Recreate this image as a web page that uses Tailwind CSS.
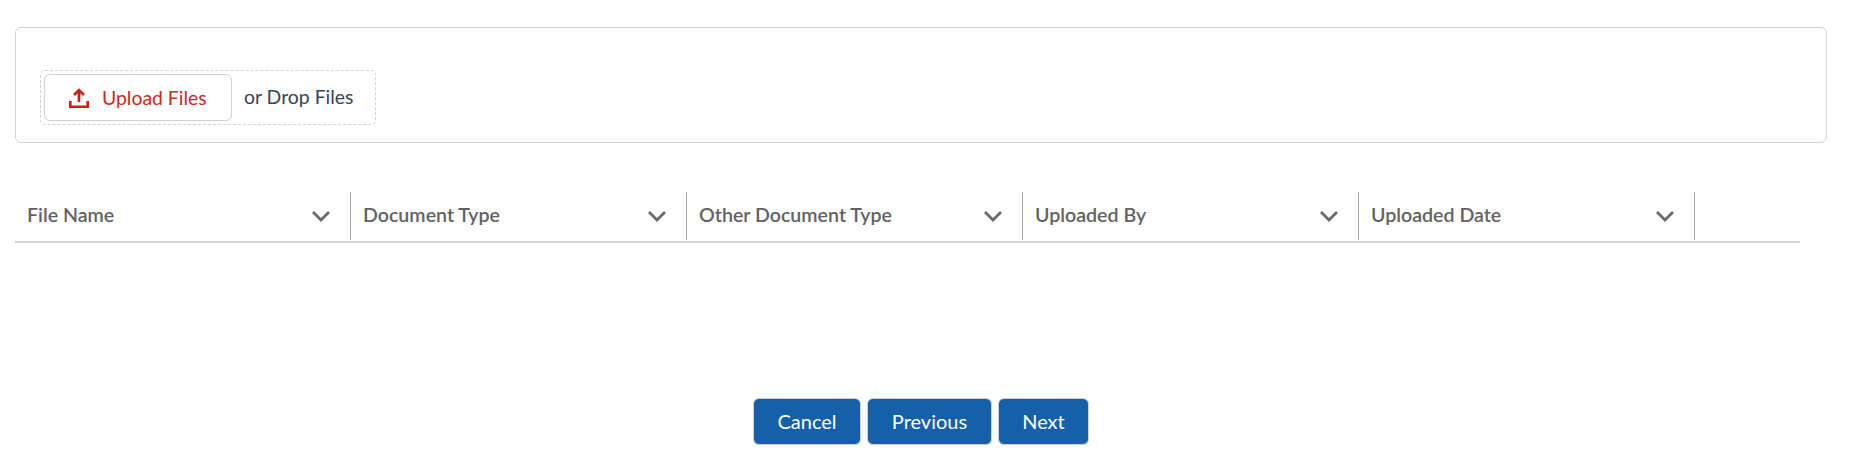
<!DOCTYPE html>
<html lang="en">
<head>
    <meta charset="UTF-8">
    <title>Documents</title>
    <script src="https://cdn.jsdelivr.net/npm/@tailwindcss/browser@4"></script>
</head>
<body class="bg-white font-['Lato',sans-serif] h-[476px] overflow-hidden">
    <div class="pt-[27px] pl-[15px] pr-[23px]">
        <!-- Upload card -->
        <div class="h-[116px] border border-[#d4d4d4] rounded-[6px] pt-[42px] pl-[24px]">
            <div class="w-[336px] h-[55px] border border-dashed border-[#d4d4d4] rounded-[5px] flex items-center pl-[3px]">
                <button class="w-[188px] h-[47px] border border-[#d0d0d0] rounded-[6px] bg-white flex items-center pl-[24px] text-[#c9281f] text-[19.4px]">
                    <svg class="w-[20px] h-[20px] mr-[13px]" viewBox="0 0 20 20" fill="none" stroke="#d8190f" stroke-width="2.6">
                        <path d="M10 14V2.5M5 7l5-5 5 5"/>
                        <path d="M1.3 13v5.7h17.4V13"/>
                    </svg>
                    Upload Files
                </button>
                <span class="ml-[12px] pb-[1px] text-[19.4px] text-[#3a4358]">or Drop Files</span>
            </div>
        </div>

        <!-- Table header -->
        <div class="mt-[49px] w-[1785px] h-[51px] border-b-2 border-[#d4d4d4] flex text-[19.6px] font-semibold text-[#626262]">
            <div class="w-[336px] h-[48px] border-r border-[#a8a8a8] flex items-center justify-between pl-[12px] pr-[20px]">
                <span class="pb-[2px]">File Name</span>
                <svg class="w-[18px] h-[11px]" viewBox="0 0 18 11" fill="none" stroke="#6a6a6a" stroke-width="2.8"><path d="M1 1l8 8 8-8"/></svg>
            </div>
            <div class="w-[336px] h-[48px] border-r border-[#a8a8a8] flex items-center justify-between pl-[12px] pr-[20px]">
                <span class="pb-[2px]">Document Type</span>
                <svg class="w-[18px] h-[11px]" viewBox="0 0 18 11" fill="none" stroke="#6a6a6a" stroke-width="2.8"><path d="M1 1l8 8 8-8"/></svg>
            </div>
            <div class="w-[336px] h-[48px] border-r border-[#a8a8a8] flex items-center justify-between pl-[12px] pr-[20px]">
                <span class="pb-[2px]">Other Document Type</span>
                <svg class="w-[18px] h-[11px]" viewBox="0 0 18 11" fill="none" stroke="#6a6a6a" stroke-width="2.8"><path d="M1 1l8 8 8-8"/></svg>
            </div>
            <div class="w-[336px] h-[48px] border-r border-[#a8a8a8] flex items-center justify-between pl-[12px] pr-[20px]">
                <span class="pb-[2px]">Uploaded By</span>
                <svg class="w-[18px] h-[11px]" viewBox="0 0 18 11" fill="none" stroke="#6a6a6a" stroke-width="2.8"><path d="M1 1l8 8 8-8"/></svg>
            </div>
            <div class="w-[336px] h-[48px] border-r border-[#a8a8a8] flex items-center justify-between pl-[12px] pr-[20px]">
                <span class="pb-[2px]">Uploaded Date</span>
                <svg class="w-[18px] h-[11px]" viewBox="0 0 18 11" fill="none" stroke="#6a6a6a" stroke-width="2.8"><path d="M1 1l8 8 8-8"/></svg>
            </div>
        </div>
    </div>

    <!-- Footer buttons -->
    <div class="mt-[155px] pl-[753px] flex gap-[6px] text-[20px] text-white">
        <button class="w-[108px] h-[47px] pb-[2px] bg-[#1560a9] border border-[#d0d0d0] rounded-[6px]">Cancel</button>
        <button class="w-[125px] h-[47px] pb-[2px] bg-[#1560a9] border border-[#d0d0d0] rounded-[6px]">Previous</button>
        <button class="w-[91px] h-[47px] pb-[2px] bg-[#1560a9] border border-[#d0d0d0] rounded-[6px]">Next</button>
    </div>
</body>
</html>
